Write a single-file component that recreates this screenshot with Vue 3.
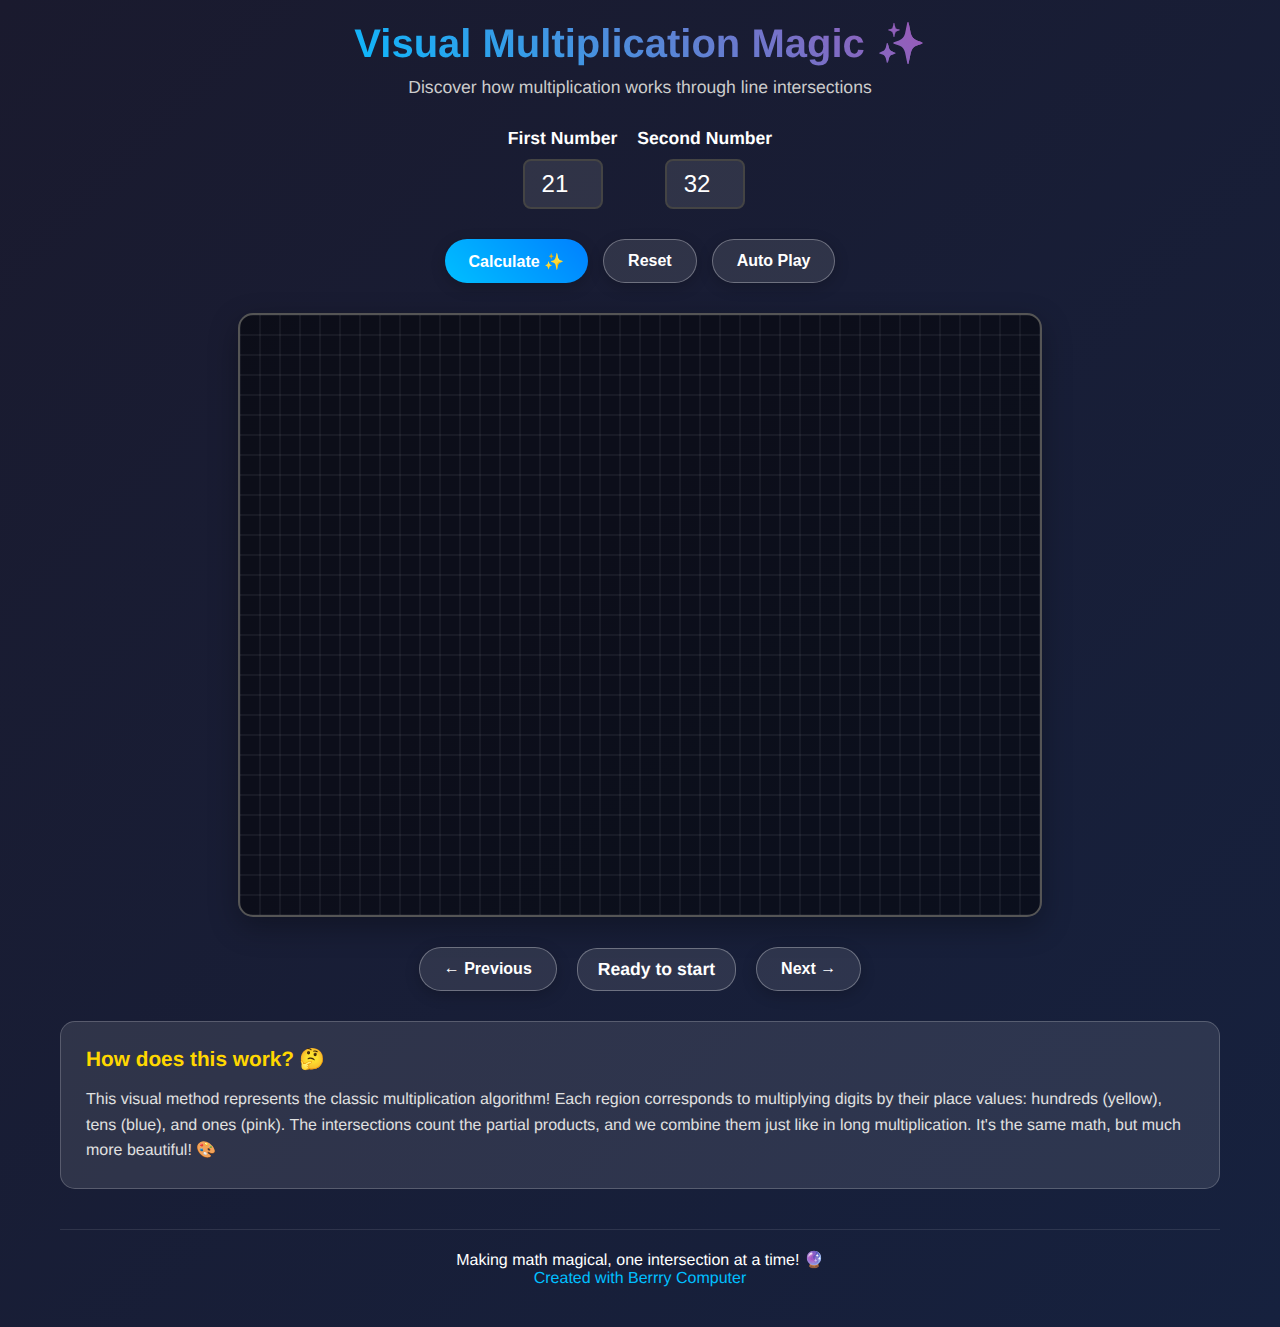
<script setup>
import { ref } from 'vue'
const first = ref(21)
const second = ref(32)
</script>

<template>
  <div class="page">
    <header class="header">
      <h1 class="title">Visual Multiplication Magic ✨</h1>
      <p class="subtitle">Discover how multiplication works through line intersections</p>
    </header>

    <section class="inputs">
      <div class="field">
        <label class="label" for="first">First Number</label>
        <input id="first" v-model="first" class="number" type="number" />
      </div>
      <div class="field">
        <label class="label" for="second">Second Number</label>
        <input id="second" v-model="second" class="number" type="number" />
      </div>
    </section>

    <section class="controls">
      <button class="btn primary">Calculate ✨</button>
      <button class="btn">Reset</button>
      <button class="btn">Auto Play</button>
    </section>

    <div class="canvas"></div>

    <section class="steps">
      <button class="btn"><span class="arrow">←</span> Previous</button>
      <div class="status">Ready to start</div>
      <button class="btn">Next <span class="arrow">→</span></button>
    </section>

    <section class="info">
      <h3 class="info-title">How does this work? 🤔</h3>
      <p class="info-text">This visual method represents the classic multiplication algorithm! Each region corresponds to multiplying digits by their place values: hundreds (yellow), tens (blue), and ones (pink). The intersections count the partial products, and we combine them just like in long multiplication. It's the same math, but much more beautiful! 🎨</p>
    </section>

    <footer class="footer">
      <div>Making math magical, one intersection at a time! 🔮</div>
      <a class="link" href="#">Created with Berrry Computer</a>
    </footer>
  </div>
</template>

<style>
html, body {
  margin: 0;
  padding: 0;
}
body {
  background: linear-gradient(135deg, #1a1a2e 0%, #16213e 100%);
  min-height: 1327px;
}
</style>

<style scoped>
.page {
  box-sizing: border-box;
  height: 1327px;
  padding: 20px 60px 0;
  font-family: "Liberation Sans", Arial, sans-serif;
  text-rendering: geometricPrecision;
  color: #fff;
  display: flex;
  flex-direction: column;
  align-items: stretch;
}
.header {
  text-align: center;
  margin-bottom: 31px;
}
.title {
  margin: 0 auto 10px;
  padding-top: 1px;
  width: fit-content;
  font-size: 40px;
  line-height: 46px;
  font-weight: 700;
  background: linear-gradient(45deg, #0cb8fc, #9b59b6);
  -webkit-background-clip: text;
  background-clip: text;
  color: transparent;
}
.subtitle {
  margin: 0;
  font-size: 17.6px;
  line-height: 20px;
  color: #ccc;
}
.inputs {
  display: flex;
  justify-content: center;
  gap: 20px;
  margin-bottom: 30px;
}
.field {
  display: flex;
  flex-direction: column;
  align-items: center;
  gap: 11px;
}
.label {
  font-size: 17.6px;
  line-height: 20px;
  font-weight: 700;
}
.number {
  box-sizing: border-box;
  width: 80px;
  height: 50px;
  padding: 0 17px;
  border: 2px solid #444;
  border-radius: 8px;
  background: rgba(255, 255, 255, 0.1);
  color: #fff;
  font-family: inherit;
  font-size: 24px;
  outline: none;
  -moz-appearance: textfield;
  appearance: textfield;
}
.controls,
.steps {
  display: flex;
  justify-content: center;
  align-items: center;
}
.controls {
  gap: 15px;
  margin-bottom: 30px;
}
.steps {
  gap: 20px;
  margin-bottom: 30px;
}
.btn {
  box-sizing: border-box;
  height: 44px;
  padding: 0 24px;
  border: 1px solid rgba(255, 255, 255, 0.3);
  border-radius: 25px;
  background: rgba(255, 255, 255, 0.1);
  color: #fff;
  font-family: inherit;
  font-size: 16px;
  font-weight: 700;
  box-shadow: 0 4px 15px rgba(0, 0, 0, 0.2);
}
.arrow {
  line-height: 1;
  vertical-align: 1px;
}
.primary {
  border: none;
  background: linear-gradient(45deg, #00bfff, #0080ff);
}
.canvas {
  box-sizing: border-box;
  flex: none;
  width: 804px;
  height: 604px;
  margin: 0 auto 30px;
  border: 2px solid #555;
  border-radius: 15px;
  background-color: rgba(0, 0, 0, 0.5);
  background-image:
    linear-gradient(rgba(255, 255, 255, 0.05) 1px, transparent 1px, transparent 19px, rgba(255, 255, 255, 0.05) 19px),
    linear-gradient(90deg, rgba(255, 255, 255, 0.05) 1px, transparent 1px, transparent 19px, rgba(255, 255, 255, 0.05) 19px);
  background-size: 20px 20px;
  box-shadow: 0 10px 30px rgba(0, 0, 0, 0.3);
}
.status {
  box-sizing: border-box;
  height: 43px;
  margin-top: 1px;
  padding: 0 20px;
  display: flex;
  align-items: center;
  border: 1px solid rgba(255, 255, 255, 0.3);
  border-radius: 20px;
  background: rgba(255, 255, 255, 0.1);
  font-size: 17.6px;
  font-weight: 700;
}
.info {
  box-sizing: border-box;
  height: 168px;
  padding: 26px 25px 0;
  border: 1px solid rgba(255, 255, 255, 0.2);
  border-radius: 15px;
  background: rgba(255, 255, 255, 0.1);
  margin-bottom: 40px;
}
.info-title {
  margin: 0 0 15px;
  font-size: 20.8px;
  line-height: 24px;
  font-weight: 700;
  color: #ffd700;
}
.info-text {
  margin: 0;
  font-size: 16px;
  line-height: 25.6px;
  color: #e0e0e0;
}
.footer {
  border-top: 1px solid rgba(255, 255, 255, 0.1);
  padding-top: 22px;
  text-align: center;
  font-size: 16px;
  line-height: 18px;
}
.link {
  color: #00bfff;
  text-decoration: none;
}
</style>
